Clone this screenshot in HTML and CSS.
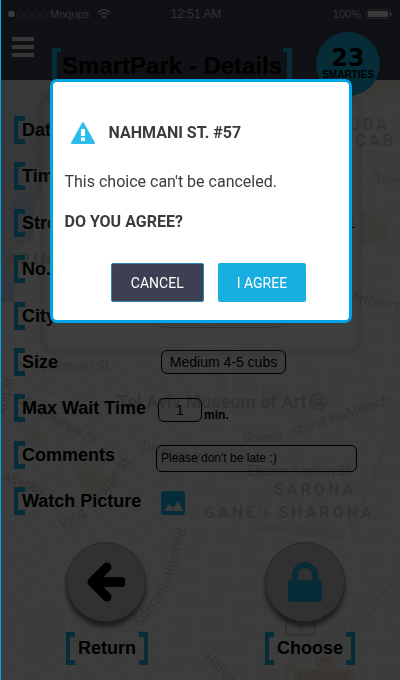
FILE: index.html
```html
<!DOCTYPE html>
<html lang="en">
<head>
<meta charset="utf-8">
<meta name="viewport" content="width=device-width, initial-scale=1">
<title>SmartPark - Details</title>
<link rel="stylesheet" href="styles.css">
</head>
<body>
<div class="app">
  <header class="header">
    <div class="status">
      <div class="carrier">
        <svg width="40" height="8" viewBox="0 0 40 8" aria-hidden="true"><circle cx="3.5" cy="4" r="3.3" fill="#e4e4e4"/><g fill="none" stroke="#737579" stroke-width="1"><circle cx="12" cy="4" r="3"/><circle cx="20" cy="4" r="3"/><circle cx="28.500" cy="4" r="3"/><circle cx="36.500" cy="4" r="3"/></g></svg>
        <span>Moqups</span>
        <svg class="wifi" width="14" height="10" viewBox="0 0 14 10" fill="none" stroke="#c4c6ca" stroke-width="1.5" aria-hidden="true"><path d="M.5 3.600Q7-2 13.500 3.600M2.800 5.800Q7 2 11.200 5.800"/><path d="M4.600 7.500Q7 5.300 9.400 7.500L7 9.800z" fill="#c4c6ca" stroke="none"/></svg>
      </div>
      <span class="clock">12:51 AM</span>
      <div class="power">
        <span>100%</span>
        <svg width="26" height="10" viewBox="0 0 26 10" aria-hidden="true"><rect x=".5" y=".5" width="23" height="9" rx="2" fill="none" stroke="#8a8c90"/><rect x="2" y="2" width="20" height="6" rx="1" fill="#e8e8e8"/><path d="M24 3q2 .5 2 2t-2 2z" fill="#b0b0b0"/></svg>
      </div>
    </div>
    <div class="titlebar">
      <button class="menu" type="button" aria-label="Menu"><span></span><span></span><span></span></button>
      <h1 class="title bracket bracket-end">SmartPark - Details</h1>
      <div class="badge"><strong>23</strong><span>SMARTIES</span></div>
    </div>
  </header>

  <main class="content">
    <svg class="map" viewBox="0 80 400 600" preserveAspectRatio="xMidYMid slice" aria-hidden="true">
      <defs>
        <linearGradient id="sea" x1="0" x2="1" y1="0" y2=".35"><stop offset="0" stop-color="#d6deea"/><stop offset=".7" stop-color="#d9dde4"/><stop offset="1" stop-color="#f0f0f0"/></linearGradient>
        <pattern id="streets" width="34" height="28" patternUnits="userSpaceOnUse" patternTransform="rotate(-28)"><path d="M0 4h34M0 17h34M9 0v28M25 4v13" stroke="#f7f7f7" stroke-width="1.500" fill="none"/></pattern>
        <pattern id="streets2" width="30" height="22" patternUnits="userSpaceOnUse" patternTransform="rotate(8)"><path d="M0 6h30M12 0v22" stroke="#f7f7f7" stroke-width="1.500" fill="none"/></pattern>
      </defs>
      <rect y="80" width="400" height="600" fill="#f0f0f0"/>
      <path d="M0 340H220L190 520 150 680H0z" fill="url(#streets)"/>
      <path d="M220 80H400V680H150L190 520z" fill="url(#streets2)"/>
      <path d="M0 80H80L52 150 30 230 0 300z" fill="url(#sea)"/>
      <path d="M38 145q-4 18-10 5M7 206q6-24 18-14M4 300q10-40 6-68" fill="none" stroke="#e6e0cc" stroke-width="4"/>
      <path d="M11 204q16-25 23 4v29q-15 12-23-1zM2 265q20 9 11 37H0z" fill="#ccdaf0"/>
      <g fill="#e5eadc"><path d="M360 80h40v9q-23 0-40 14zM367 213q26 0 20 24-9 10-28 4v-27zM92 462l24 25-30 10-12-24zM34 425l16 16-22 1zM370 150l10 22-9 8zM366 430l5-7 5 5-5 8z"/><path d="M262 389h20v14h-20zM306 387l10 5-8 6zM332 382h9v7h-9z"/></g>
      <path d="M250 523h80l6 17-82-9z" fill="#eae7df"/>
      <path d="M20 610l30-6 15 40-27 18z" fill="#efebe5"/>
      <g fill="none" stroke="#ebe5d5" stroke-width="4"><path d="M400 414Q382 450 371 483T334 540M286 680Q290 655 297 637M400 574Q382 597 345 623T282 680"/><path d="M400 586Q378 609 350 631"/></g>
      <g fill="none" stroke="#f7f7f7" stroke-width="4"><path d="M40 510L60 560 74 680M128 360L150 430 143 520M232 340L230 425M0 402q70-16 160 30M344 520L356 560"/></g>
      <g class="map-text">
        <g class="district"><text x="335" y="130">HUDA</text><text x="342" y="146">CCAB</text><text x="6" y="265">ARIN</text><text x="274" y="495">SARONA</text><text x="204" y="518">GANE'I SHARONA</text></g>
        <text x="377" y="184" font-size="13">Pinkas</text>
        <text x="117" y="408" font-size="18" font-weight="bold">Tel Aviv Museum of Art</text>
        <text x="35" y="371" font-size="14">Frishman St</text>
        <text x="350" y="301" font-size="14" transform="rotate(11 350 301)">Arlozorov</text>
        <text x="22" y="405" font-size="14" transform="rotate(29 22 405)">Bograshov St</text>
        <text x="5" y="414" font-size="13" transform="rotate(-76 5 414)">kon St</text>
        <text x="141" y="450" font-size="14" transform="rotate(14 141 450)">Dizengoff</text>
        <text x="64" y="530" font-size="14" transform="rotate(-35 64 530)">King</text>
        <text x="93" y="510" font-size="14" transform="rotate(-52 93 510)">George St</text>
        <text x="1" y="480" font-size="14" transform="rotate(20 1 480)">Allenby</text>
        <text x="242" y="442" font-size="14">Sderot</text>
        <text x="293" y="437" font-size="14" transform="rotate(-19 293 437)">Sha'ul HaMelech</text>
        <text x="247" y="476" font-size="14">Eliezer Kaplan St</text>
        <text x="140" y="627" font-size="14" transform="rotate(-52 140 627)">Sderot</text>
        <text x="168" y="593" font-size="14" transform="rotate(-74 168 593)">Rothschild</text>
        <text x="203" y="659" font-size="14" transform="rotate(42 203 659)">HaRak</text>
      </g>
      <circle cx="318" cy="402" r="8" fill="#ecebea" stroke="#d2c8c4" stroke-width="2"/><path d="M313 400l5-3 5 3zM313 401h10v5h-10z" fill="#d2c8c4"/>
      <rect x="286" y="618" width="29" height="17" rx="2" fill="#f4f0f0" stroke="#e0c4c6" stroke-width="2"/><text x="297" y="632" font-size="11" fill="#e0c4c6">2</text>
      <path d="M315 657h20v11h-20zM294 669h61v11h-61z" fill="#e8e0c4"/><g class="map-text" font-size="11"><text x="319" y="666">13</text><text x="298" y="679">LaGuardia</text></g>
    </svg>

    <form class="details">
      <div class="row"><label class="bracket" for="date">Date</label><input id="date" class="field wide" value="" readonly></div>
      <div class="row"><label class="bracket" for="time">Time</label><input id="time" class="field wide" value="" readonly></div>
      <div class="row"><label class="bracket" for="street">Street</label><input id="street" class="plain" value="Nahmani 1" readonly></div>
      <div class="row"><label class="bracket" for="no">No.</label><input id="no" class="field short" value="57" readonly></div>
      <div class="row"><label class="bracket" for="city">City</label><input id="city" class="field faint" value="Tel Aviv" readonly></div>
      <div class="row"><label class="bracket" for="size">Size</label><input id="size" class="field inset" value="Medium 4-5 cubs" readonly></div>
      <div class="row low"><label class="bracket" for="wait">Max Wait Time</label><input id="wait" class="field short" value="1" readonly><span class="unit">min.</span></div>
      <div class="row low"><label class="bracket" for="comments">Comments</label><input id="comments" class="field comments" value="Please don't be late :)" readonly></div>
      <div class="row low"><span class="bracket">Watch Picture</span><button class="picture" type="button" aria-label="Watch picture"><svg width="24" height="24" viewBox="0 0 24 24"><rect width="24" height="24" rx="3" fill="#18aee0"/><path d="M3 20l5-7 4 4 5-7 5 10z" fill="#f0f0f0"/></svg></button></div>
    </form>

    <nav class="actions">
      <button class="action" type="button">
        <span class="disc"><svg width="40" height="42" viewBox="0 0 40 42" aria-hidden="true"><path d="M21 6L6 21 21 36M8 21H24" fill="none" stroke="#000" stroke-width="9" stroke-linecap="round" stroke-linejoin="round"/><rect x="14" y="16" width="25" height="10" rx="3"/></svg></span>
        <span class="caption bracket bracket-end">Return</span>
      </button>
      <button class="action" type="button">
        <span class="disc"><svg width="34" height="40" viewBox="0 0 34 40" aria-hidden="true"><path d="M7 20V13a10 10 0 0 1 20 0v7" fill="none" stroke="#18aee0" stroke-width="6"/><rect y="18" width="34" height="22" rx="3" fill="#18aee0"/></svg></span>
        <span class="caption bracket bracket-end">Choose</span>
      </button>
    </nav>
  </main>
</div>

<div class="overlay">
  <section class="dialog" role="alertdialog" aria-modal="true" aria-labelledby="dialog-title">
    <h2 id="dialog-title"><svg width="24" height="22" viewBox="0 0 24 22" aria-hidden="true"><path d="M12 1.200L23 21H1z" fill="#2bbcec" stroke="#2bbcec" stroke-width="2" stroke-linejoin="round"/><path d="M10 7h4v7h-4zM10 15.500h4V19h-4z" fill="#fff"/></svg>NAHMANI ST. #57</h2>
    <p>This choice can't be canceled.</p>
    <p class="question">DO YOU AGREE?</p>
    <div class="buttons"><button class="btn cancel" type="button">CANCEL</button><button class="btn agree" type="button">I AGREE</button></div>
  </section>
</div>
</body>
</html>
```
FILE: styles.css
```css
*, *::before, *::after { box-sizing: border-box; }

body {
  margin: 0;
  font-family: "Liberation Sans", Arial, sans-serif;
  color: #000;
  background: #f0f0f0;
}

button, input { font: inherit; color: inherit; }
button { padding: 0; border: 0; background: none; cursor: pointer; }

.app { min-height: 100vh; display: flex; flex-direction: column; }

/* Header */
.header { position: relative; z-index: 1; height: 80px; padding: 0 8px; background: #404450; }

.status {
  display: grid;
  grid-template-columns: 1fr auto 1fr;
  align-items: center;
  height: 28px;
  font-size: 11px;
  color: #c4c6ca;
}
.carrier, .power { display: flex; align-items: center; gap: 2px; }
.clock { padding: 0 8px 0 0; font-size: 12px; }
.wifi { margin-left: 6px; }
.power { justify-content: flex-end; gap: 5px; }

.titlebar { display: flex; align-items: flex-start; padding-left: 4px; }
.menu { display: flex; flex-direction: column; gap: 4px; width: 22px; margin-top: 9px; }
.menu span { height: 4px; background: #d4d4d4; }

.bracket { position: relative; font-weight: bold; }
.bracket::before, .bracket-end::after {
  content: "";
  position: absolute;
  top: 0;
  bottom: 0;
  width: 11px;
  border: 5px solid #18aee0;
}
.bracket::before { left: 0; border-right: 0; border-left-width: 4px; }
.bracket-end::after { right: 0; border-left: 0; border-right-width: 4px; }

.title { margin: 20px 0 0 18px; padding: 0 10px; font-size: 24px; line-height: 36px; white-space: nowrap; }
.title.bracket::before, .title.bracket::after { width: 9px; border-width: 4px 5px; }
.title.bracket::before { border-right: 0; }
.title.bracket::after { border-left: 0; }

.badge {
  display: flex;
  flex-direction: column;
  align-items: center;
  width: 64px;
  height: 64px;
  margin: 4px 12px 0 auto;
  padding-top: 14px;
  border-radius: 50%;
  background: #18aee0;
}
.badge strong { font: bold 24px/24px "DejaVu Sans", sans-serif; }
.badge span { font-size: 10px; line-height: 10px; font-weight: bold; }

/* Details */
.content { position: relative; flex: 1; display: flex; flex-direction: column; padding: 36px 14px 15px; }
.map { position: absolute; inset: 0; width: 100%; height: 100%; }
.map-text { fill: #d0c8c4; font-family: Roboto, sans-serif; }
.district { font-size: 16px; font-weight: bold; letter-spacing: 3px; }

.details { position: relative; flex: 1; display: flex; flex-direction: column; justify-content: space-between; }
.row { display: flex; align-items: center; height: 28px; }
.row.low { align-items: flex-end; }
.row .bracket { width: 144px; height: 28px; padding-left: 8px; font-size: 18px; line-height: 28px; white-space: nowrap; }

.field {
  height: 24px;
  padding: 0 4px;
  border: 1px solid #000;
  border-radius: 6px;
  background: none;
  font-size: 14px;
  text-align: center;
}
.wide { width: 160px; }
.faint { width: 124px; border-color: #b0b0b0; }
.inset { width: 125px; margin-left: 3px; }
.short { width: 44px; }
.comments { width: 201px; height: 27px; margin: 0 0 -3px -2px; font-size: 12px; text-align: left; }
.plain { width: 197px; padding: 0; border: 0; background: none; font-size: 14px; text-align: right; }
.unit { padding-left: 2px; font-size: 12px; font-weight: bold; }
.picture { display: flex; margin-left: 3px; }

/* Bottom actions */
.actions { position: relative; display: flex; justify-content: space-between; margin-top: 27px; padding: 0 31px 0 52px; }
.action { display: flex; flex-direction: column; align-items: flex-start; gap: 10px; }
.disc {
  display: grid;
  place-items: center;
  width: 80px;
  height: 80px;
  border: 1px solid #999;
  border-radius: 50%;
  background: #c4c4c4;
  box-shadow: 0 5px 5px rgba(0, 0, 0, .55);
}
.caption { padding: 0 12px; font-size: 18px; line-height: 33px; }
.caption::before, .caption::after { width: 9px; }

/* Confirmation dialog */
.overlay {
  position: fixed;
  inset: 0;
  z-index: 2;
  display: flex;
  align-items: flex-start;
  justify-content: center;
  padding: 79px 24px 24px;
  border-left: 1px solid #00a8e8;
  background: rgba(0, 0, 0, .75);
}
.dialog {
  width: 100%;
  max-width: 302px;
  padding: 37px 12px 18px;
  border: 3px solid #00a3e4;
  border-radius: 7px;
  background: #fff;
  color: #3c3c3c;
  font: 16px/24px Roboto, sans-serif;
  box-shadow: 0 22px 0 2px rgba(255, 255, 255, .015), 0 22px 0 5px rgba(255, 255, 255, .015), 0 22px 0 8px rgba(255, 255, 255, .015), 0 22px 5px 10px rgba(0, 0, 0, .14);
}
.dialog h2 { display: flex; align-items: center; gap: 14px; margin: 0 0 24px; padding-left: 6px; font-size: 16px; line-height: 27px; }
.dialog p { margin: 0 0 16px; }
.dialog .question { margin-bottom: 29px; font-weight: bold; }
.buttons { display: flex; justify-content: center; gap: 14px; padding-left: 16px; }
.btn { height: 39px; padding: 0 19px; border-radius: 2px; color: #fff; font-size: 14px; }
.cancel { border: 1px solid #2b86ae; background: #3d4052; }
.agree { background: #19aee0; }
```
